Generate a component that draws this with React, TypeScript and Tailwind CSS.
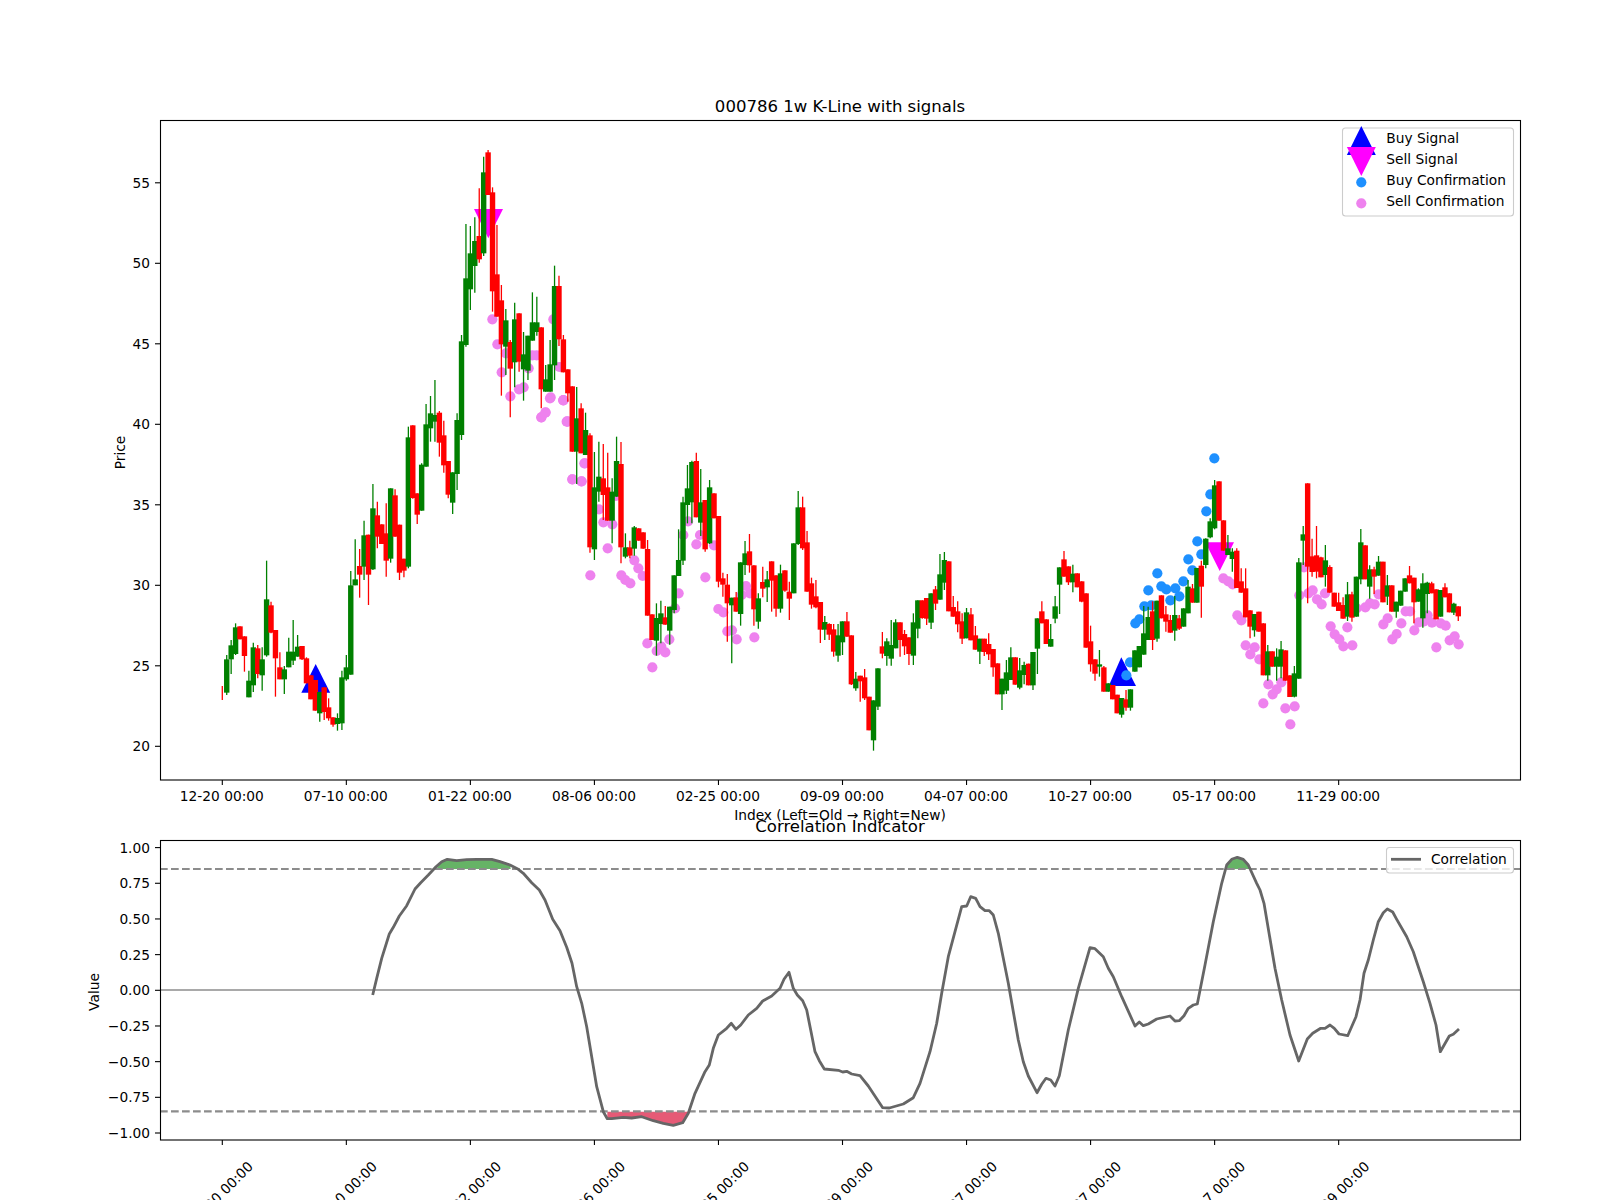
const seg = (base: number, rows: string) =>
  rows
    .trim()
    .split(/\s*,\s*/)
    .map((r) => {
      const [c, a, b, d, e] = r.trim().split(/\s+/);
      return { c: c === "g" ? "#008000" : "#ff0000", wt: base + +a / 3, bt: base + +b / 3, bb: base + +d / 3, wb: base + +e / 3 };
    });

const candles = [
  ...seg(400, `r 858 880 880 900,g 765 778 878 885,g 720 736 778 822,g 670 682 762 765,r 679 679 718 718,r 709 709 768 815,g 812 842 892 892,g 728 742 856 876,r 735 745 822 835,g 742 778 826 872,
  g 482 598 766 770,r 605 616 698 700,r 690 690 775 890,r 757 802 838 838,g 798 808 838 882,g 713 755 802 802,g 660 755 782 795,g 705 740 770 770,r 738 738 778 780,r 772 775 850 850,
  r 825 826 898 898,r 840 840 932 932,g 875 876 940 965,r 862 862 936 960,r 895 922 955 962,r 952 952 974 980,g 940 954 972 992,g 812 832 970 990,g 765 802 838 842,g 513 556 824 824,
  g 418 538 556 556,r 447 498 524 593,g 362 406 500 540,r 404 404 524 615,g 252 325 508 510,r 305 346 410 445,r 373 373 432 432,r 310 400 482 530,g 265 265 476 488,r 268 286 410 410,
  r 374 374 518 540,r 476 476 512 532,g 80 112 500 505,r 76 76 294 296,r 280 280 344 372,g 190 194 332 332,g 12 73 200 200,g -12 40 85 125,g -60 45 65 125,r 33 38 128 170,
  r 62 106 196 218,r 183 183 284 295,g 217 217 308 342,g 40 60 222 270,g -195 -176 105 120`),
  ...seg(130, `g 282 445 645 650,g 288 370 478 540,g 262 333 408 488,r 175 318 388 398,g 80 127 370 378,r 60 67 195 195,r 172 187 484 545,r 285 433 560 560,r 465 511 643 797,g 537 571 650 735,
  r 630 636 716 862,g 518 568 697 772,r 550 550 695 725,g 606 673 718 812,g 617 617 722 750,g 487 577 632 632,g 500 577 606 617,r 592 592 778 835,g 705 748 785 785,g 630 703 785 785,
  g 407 468 706 750,r 437 468 628 648,r 615 628 727 727,r 718 718 790 815`),
  ...seg(390, `r -11 -11 185 185,g -9 85 185 282,r 40 55 190 190,g 68 120 195 195,r 130 136 472 488,g 186 292 478 510,g 155 260 305 335,r 162 265 315 390,r 188 292 392 392,g 265 305 392 460,
  g 140 213 320 320,r 156 222 472 520,g 430 472 500 505,r 452 472 497 505,g 408 412 476 497,r 415 415 452 452,r 427 427 476 476,r 450 477 677 677,r 673 673 750 750,g 640 684 752 797,
  g 632 670 702 760,r 648 682 704 704,g 650 650 722 764,g 556 556 660 670,g 418 510 558 558,g 320 337 512 525,g 225 295 345 400,g 212 216 337 400,r 188 213 382 382,g 237 337 398 438,
  r 330 330 478 485,g 270 292 460 462,r 310 310 385 385,r 378 378 575 592,r 548 565 584 620,r 552 584 640 755,g 623 623 646 820,r 606 622 665 665,g 517 517 672 707,g 453 490 525 555,
  r 432 484 526 548,r 526 526 658 707,g 610 625 695 716,r 530 576 596 622,g 543 568 592 636,r 514 514 572 665,r 556 556 656 680,g 524 550 656 668,r 541 541 602 605,r 575 605 626 690,
  g 460 460 610 610,g 303 352 462 465`),
  ...seg(480, `r 50 82 205 210,r 153 187 335 335,r 293 310 374 386,r 300 349 382 385,r 366 366 449 489,g 408 426 449 480,r 430 432 464 480,r 432 448 515 530,g 432 466 527 545,g 424 424 487 525,
  r 396 424 470 470,r 466 466 613 615,g 576 596 625 632,r 587 587 604 665,r 567 592 655 660,r 650 650 751 751,g 661 661 781 812,g 565 565 680 690,r 456 499 521 535,g 475 484 528 557,
  g 420 495 536 557,g 418 427 505 505,r 427 427 480 530,r 450 462 499 525,r 472 472 522 555,g 400 427 527 555,g 361 361 446 475,r 361 361 414 416,r 354 354 416 435,g 340 340 428 447,
  r 318 328 371 390,g 222 283 359 359,g 216 240 308 330,r 244 244 394 394,r 348 381 410 410,r 364 394 433 457,r 400 424 476 492,g 384 397 475 475,r 384 403 481 481,r 438 466 509 509,
  g 476 476 515 552,r 476 476 516 528,r 460 492 523 540,r 507 507 562 590,r 550 550 643 643,g 596 596 643 690,g 540 577 632 642,g 502 532 600 600,r 532 532 614 614,g 534 571 623 628,
  g 545 555 585 613,r 551 551 616 616,g 516 516 616 630,g 415 415 506 582,r 364 394 430 430,r 418 418 492 492,g 432 477 500 500,g 348 379 416 430,g 262 262 314 402,r 213 238 290 290,
  r 259 259 307 315,g 254 281 307 337,r 280 280 322 322,r 304 304 365 367,r 340 340 503 503,r 437 484 553 575`),
  ...seg(440, `r 658 658 701 722,g 630 673 680 710,r 678 682 755 755,g 730 730 755 755,r 735 735 778 778,r 764 764 820 820,g 774 774 824 833,r 750 778 803 812,g 748 748 803 812,g 631 631 695 695,
  g 618 618 682 682,g 498 580 644 644,g 500 531 600 600,r 484 514 600 630,g 482 482 596 605,r 466 466 535 535,r 498 523 545 575,r 525 540 578 578,g 468 525 572 602,r 525 535 566 570,
  g 505 505 560 560,g 420 440 520 520,r 432 445 488 488,g 384 384 488 488,r 362 377 440 533,g 295 296 375 385,g 235 244 292 295,g 120 136 265 268,r 124 124 242 242,r 241 241 332 332,
  g 285 325 345 345,g 325 335 357 395,r 325 332 444 444,r 385 424 458 458,r 385 445 532 532,r 511 511 560 595,g 522 522 571 590,r 515 515 575 575,r 550 550 706 706,g 615 634 706 722,
  r 634 634 680 680,g 625 650 680 722,g 603 628 680 715,r 631 631 722 722,r 706 706 771 771,g 678 700 770 772,g 354 367 716 716,g 258 283 302 375,r 130 130 380 490,r 296 349 396 410,
  r 258 346 395 415,r 350 352 412 412,g 315 361 405 440,r 376 381 458 458,r 458 458 500 500,r 458 487 513 513,r 472 495 536 536,g 426 463 530 543,r 455 463 533 545,g 410 410 530 530,
  g 267 307 418 433,r 316 316 418 418,g 376 388 440 476,r 380 388 410 462,g 348 365 407 407,r 365 365 487 487,g 405 436 470 495,r 436 436 515 515,g 485 485 515 533,g 452 452 497 497,
  g 415 415 455 455,r 378 406 430 430,r 413 413 487 550,g 445 448 485 485,g 400 430 535 563,g 425 428 462 520,r 425 430 460 460,r 448 448 538 538,g 450 450 530 530,r 430 442 472 472,
  r 460 460 517 517,g 488 491 518 525,r 499 499 529 543`),
];

const cx = (i: number) => 222.3 + 4.43 * i;

const pts = (ox: number, oy: number, s: string) =>
  s
    .trim()
    .split(/\s+/)
    .map((p) => {
      const [a, b] = p.split(",");
      return [ox + +a / 3, oy + +b / 3];
    });

const violet = [
  ...pts(150, 400, "1174,52 1186,38 1200,-5 1240,0 1250,65 1267,238 1295,244 1303,190"),
  ...pts(400, 130, "277,568 292,643 318,670 397,676 410,676 386,715 305,727 357,778 371,772 331,799 452,802 490,811 424,862 437,847 503,875 478,711 460,568"),
  ...pts(560, 390, "10,31 22,94 75,220 37,268 64,274 117,358 130,397 157,403 143,475 91,556 223,511 184,556 196,570 211,580 235,535 248,558 262,760 290,783 304,770 316,787 328,748 277,832 356,610 345,655 384,394 370,435 420,435 409,463 462,466 436,562 475,657 490,667 502,724 516,721 530,748 583,742 558,588 570,610 545,615 168,318"),
  ...pts(1050, 440, "520,415 535,424 548,433 562,526 574,541 587,616 614,622 601,643 628,658 655,733 680,748 668,763 694,727 640,790 706,805 734,799 721,853 748,466 762,382 775,460 788,451 801,478 815,493 825,460 842,559 854,583 868,598 880,619 907,616 892,562 920,505 946,502 960,490 974,493 986,463 1000,553 1013,535 1027,598 1040,582 1054,550 1067,514 1080,514 1093,571 1106,547 1133,526 1120,545 1146,548 1172,550 1187,557 1159,622 1199,601 1214,589 1226,613"),
];
const blue = pts(1050, 440, "493,55 481,163 469,214 442,304 415,358 454,343 427,391 400,424 322,400 295,451 334,439 349,448 376,445 388,469 361,481 283,499 304,496 268,538 256,550 240,667 229,706");

const corr = [
  ...pts(360, 840, "38,465 50,415 65,355 88,282 100,262 118,228 140,197 165,147 182,128 205,105 228,80 245,65 262,58 290,62 320,59 350,58 395,58 420,65 450,75 475,88 490,100 515,128 538,150 555,180 578,238 600,272 620,322 636,370 650,440 665,490 680,560 695,650 710,740 730,815 742,836 755,836 790,832 815,834 845,830 880,842 910,850 940,856 968,848 985,820 1005,760 1035,695 1048,675 1060,625 1075,585 1100,565 1114,550 1128,568 1142,555 1165,525 1190,505 1208,483 1235,468 1260,445 1272,418 1287,397 1300,445 1312,465 1328,482 1340,510 1352,570 1365,635 1378,662 1393,687 1435,691 1448,696 1460,694 1475,702"),
  ...pts(860, 840, "0,707 25,738 68,803 88,804 130,792 160,773 180,730 210,635 230,550 245,460 265,350 305,200 320,198 332,170 347,175 360,200 375,212 388,212 400,225 415,280 445,430 475,600 490,665 505,708 531,758 545,733 558,715 572,720 585,738 598,707 625,570 655,445 690,323 705,326 730,350 745,385 760,410 785,470 825,558 838,546 850,557 865,552 890,537 930,528 945,543 958,542 972,527 985,505 1000,495 1012,492 1035,375 1060,245 1085,130 1100,75 1115,58 1132,52 1150,58 1165,75 1190,130 1200,150 1212,190 1245,385 1265,480 1290,585 1316,663 1342,597 1358,580 1382,565 1395,565 1410,555 1423,565 1437,582 1463,587 1488,530"),
  ...pts(1200, 760, "480,720 492,640 505,600 520,540 535,485 550,458 562,447 578,456 590,478 620,530 640,575 670,665 690,730 708,795 721,875 748,828 760,823 777,807"),
];
const toPts = (a: number[][]) => a.map((p) => p[0].toFixed(1) + "," + p[1].toFixed(1)).join(" ");
const fillG1 = pts(360, 840, "228,87 245,65 262,58 290,62 320,59 350,58 395,58 420,65 450,75 452,87");
const fillG2 = pts(860, 840, "1097,87 1100,75 1115,58 1132,52 1150,58 1165,75 1172,87");
const fillR = pts(360, 840, "742,815 742,836 755,836 790,832 815,834 845,830 880,842 910,850 940,856 968,848 985,820 985,815");

const labels = ["12-20 00:00", "07-10 00:00", "01-22 00:00", "08-06 00:00", "02-25 00:00", "09-09 00:00", "04-07 00:00", "10-27 00:00", "05-17 00:00", "11-29 00:00"];
const tickX = (i: number) => 222.3 + 124.04 * i;
const priceTicks = [20, 25, 30, 35, 40, 45, 50, 55];
const corrTicks = ["1.00", "0.75", "0.50", "0.25", "0.00", "−0.25", "−0.50", "−0.75", "−1.00"];

export default function App() {
  return (
    <div className="w-[1600px] h-[1200px] overflow-hidden bg-white flex flex-col text-black [font-family:'DejaVu_Sans',sans-serif]">
      <svg viewBox="0 0 1600 824" className="w-[1600px] h-[824px] shrink-0 overflow-visible">
        <text x="840" y="112" textAnchor="middle" className="text-[16.55px]">000786 1w K-Line with signals</text>
        <polygon points="315.7,664 301.3,692.7 330.2,692.7" fill="#0000ff" />
        <polygon points="1121.3,657.3 1108.7,686 1136,686" fill="#0000ff" />
        <polygon points="474,209 503,209 488.3,238.3" fill="#ff00ff" />
        <polygon points="1205.3,542.3 1234,542.3 1219.7,571" fill="#ff00ff" />
        {violet.map((p, i) => (
          <circle key={i} cx={p[0]} cy={p[1]} r="5.1" fill="#ee82ee" />
        ))}
        {blue.map((p, i) => (
          <circle key={i} cx={p[0]} cy={p[1]} r="5.1" fill="#1e90ff" />
        ))}
        {candles.map((k, i) => (
          <g key={i} fill={k.c} stroke={k.c}>
            <line x1={cx(i)} x2={cx(i)} y1={k.wt} y2={k.wb} strokeWidth="1.3" />
            <rect x={cx(i) - 2.7} y={k.bt} width="5.4" height={k.bb - k.bt} stroke="none" />
          </g>
        ))}
        <rect x="160.5" y="120.5" width="1360" height="659.5" fill="none" stroke="#000" strokeWidth="1.1" />
        {labels.map((t, i) => (
          <g key={t}>
            <line x1={tickX(i)} x2={tickX(i)} y1="780" y2="785" stroke="#000" strokeWidth="1.1" />
            <text x={tickX(i) - 0.5} y="801" textAnchor="middle" className="text-[13.75px]">{t}</text>
          </g>
        ))}
        {priceTicks.map((v) => {
          const y = 746.3 - (v - 20) * 16.1;
          return (
            <g key={v}>
              <line x1="155" x2="160" y1={y} y2={y} stroke="#000" strokeWidth="1.1" />
              <text x="150" y={y + 5} textAnchor="end" className="text-[13.75px]">{v}</text>
            </g>
          );
        })}
        <text x="840" y="820" textAnchor="middle" className="text-[13.75px]">Index (Left=Old → Right=New)</text>
        <text transform="translate(125 452.5) rotate(-90)" textAnchor="middle" className="text-[13.75px]">Price</text>
        <rect x="1342.5" y="128" width="171" height="88" rx="3" fill="#fff" fillOpacity="0.8" stroke="#cccccc" strokeWidth="1.1" />
        <polygon points="1361.3,126 1346.9,155 1375.8,155" fill="#0000ff" />
        <polygon points="1346.9,147 1375.8,147 1361.3,176" fill="#ff00ff" />
        <circle cx="1361.3" cy="182.3" r="5.1" fill="#1e90ff" />
        <circle cx="1361.3" cy="203.3" r="5.1" fill="#ee82ee" />
        <text x="1386.3" y="143.3" className="text-[13.75px]">Buy Signal</text>
        <text x="1386.3" y="164.3" className="text-[13.75px]">Sell Signal</text>
        <text x="1386.3" y="185.3" className="text-[13.75px]">Buy Confirmation</text>
        <text x="1386.3" y="206.3" className="text-[13.75px]">Sell Confirmation</text>
      </svg>
      <svg viewBox="0 824 1600 376" className="w-[1600px] h-[376px] shrink-0 overflow-visible">
        <text x="840" y="832" textAnchor="middle" className="text-[16.55px]">Correlation Indicator</text>
        <polygon points={toPts(fillG1)} fill="#66b366" />
        <polygon points={toPts(fillG2)} fill="#66b366" />
        <polygon points={toPts(fillR)} fill="#e65a76" />
        <line x1="160" x2="1520" y1="869" y2="869" stroke="#8c8c8c" strokeWidth="2.08" strokeDasharray="7.7 3.3" />
        <line x1="160" x2="1520" y1="1111.4" y2="1111.4" stroke="#8c8c8c" strokeWidth="2.08" strokeDasharray="7.7 3.3" />
        <line x1="160" x2="1520" y1="990" y2="990" stroke="#a9a9a9" strokeWidth="2" />
        <polyline points={toPts(corr)} fill="none" stroke="#666666" strokeWidth="2.8" strokeLinejoin="round" />
        <rect x="160.5" y="840.5" width="1360" height="299.5" fill="none" stroke="#000" strokeWidth="1.1" />
        {labels.map((t, i) => (
          <g key={t}>
            <line x1={tickX(i)} x2={tickX(i)} y1="1140" y2="1145" stroke="#000" strokeWidth="1.1" />
            <text transform={`translate(${tickX(i) + 2} 1197) rotate(-45)`} textAnchor="middle" className="text-[13.75px]">{t}</text>
          </g>
        ))}
        {corrTicks.map((t, i) => {
          const y = 990.3 - (1 - i * 0.25) * 142.7;
          return (
            <g key={t}>
              <line x1="155" x2="160" y1={y} y2={y} stroke="#000" strokeWidth="1.1" />
              <text x="150" y={y + 5} textAnchor="end" className="text-[13.75px]">{t}</text>
            </g>
          );
        })}
        <text transform="translate(98.5 992) rotate(-90)" textAnchor="middle" className="text-[13.75px]">Value</text>
        <rect x="1386.5" y="847.5" width="127" height="25.5" rx="3" fill="#fff" fillOpacity="0.8" stroke="#cccccc" strokeWidth="1.1" />
        <line x1="1391" x2="1421" y1="859.3" y2="859.3" stroke="#666666" strokeWidth="2.8" />
        <text x="1431" y="864.3" className="text-[13.75px]">Correlation</text>
      </svg>
    </div>
  );
}
